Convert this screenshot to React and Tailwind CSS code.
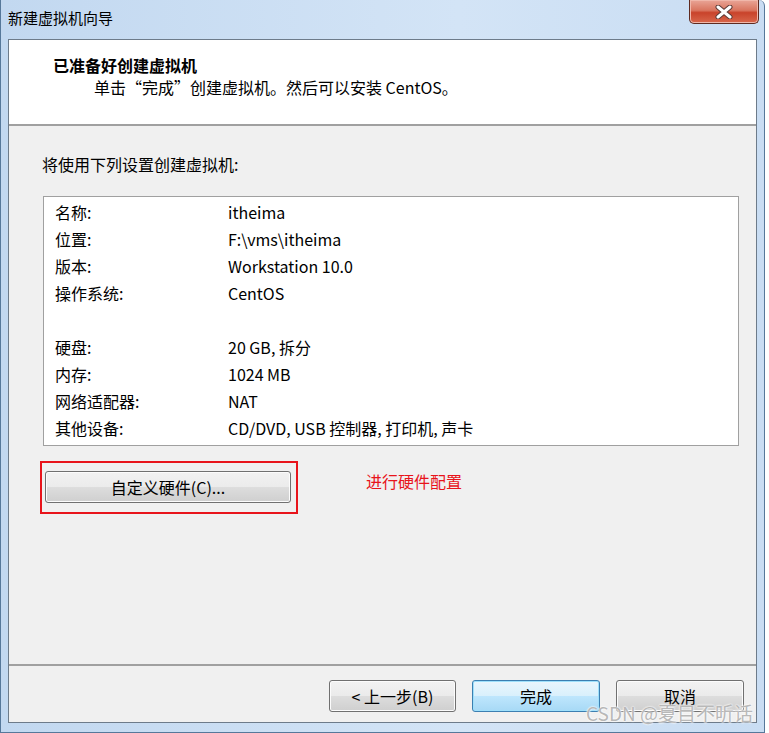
import React from "react";

const rows = [
  ["名称:", "itheima"],
  ["位置:", "F:\\vms\\itheima"],
  ["版本:", "Workstation 10.0"],
  ["操作系统:", "CentOS"],
  null,
  ["硬盘:", "20 GB, 拆分"],
  ["内存:", "1024 MB"],
  ["网络适配器:", "NAT"],
  ["其他设备:", "CD/DVD, USB 控制器, 打印机, 声卡"],
];

const font = { fontFamily: '"Noto Sans CJK SC", "Noto Sans", sans-serif' };

function WinButton({ children, focused, className = "" }) {
  return (
    <div
      className={`flex h-[32px] items-center justify-center rounded-[3px] border text-[16px] text-black ${
        focused
          ? "border-[#3c7fb1] bg-[linear-gradient(#eaf6fd_0%,#d9f0fc_50%,#bee6fd_51%,#a7d9f5_100%)] shadow-[inset_0_0_0_1px_#9fe0fb]"
          : "border-[#707070] bg-[linear-gradient(#f2f2f2_0%,#ebebeb_50%,#dddddd_51%,#cfcfcf_100%)] shadow-[inset_0_0_0_1px_#fcfcfc]"
      } ${className}`}
    >
      {children}
    </div>
  );
}

export default function App() {
  return (
    <div className="flex h-[733px] w-[769px] bg-white" style={font}>
      {/* Window frame */}
      <div className="flex h-full w-[765px] flex-col rounded-tr-[6px] border-r border-b border-l border-[#56789a] bg-[linear-gradient(90deg,#c2d8f0,#d3e4f6_60%,#c9ddf3)]">
        {/* Title bar */}
        <div className="flex h-[39px] items-start justify-between">
          <div className="pl-[7px] pt-[8px] text-[15px] leading-[20px] text-black">新建虚拟机向导</div>
          <div className="mr-[5px] flex h-[24px] w-[70px] items-center justify-center rounded-b-[5px] border border-t-0 border-[#5e2a20] bg-[linear-gradient(#e9a597_0%,#d9755f_45%,#c9432b_55%,#d8674c_100%)] shadow-[inset_0_0_0_1px_#f0b7aa]">
            <svg width="18" height="14" viewBox="0 0 18 14">
              <path d="M3 2 L15 12 M15 2 L3 12" stroke="#5a3a36" strokeWidth="5" strokeLinecap="round" />
              <path d="M3 2 L15 12 M15 2 L3 12" stroke="#ffffff" strokeWidth="3" strokeLinecap="round" />
            </svg>
          </div>
        </div>

        {/* Client area */}
        <div className="relative mx-[7px] mb-[9px] flex flex-1 flex-col border border-[#6d7b8a] bg-[#f0f0f0]">
          {/* Header */}
          <div className="h-[86px] border-b-2 border-[#a0a0a0] bg-white">
            <div className="pl-[44px] pt-[14px] text-[16px] font-bold leading-[22px] text-black">已准备好创建虚拟机</div>
            <div className="pl-[85px] pt-[0px] text-[16px] leading-[22px] text-black">单击“完成”创建虚拟机。然后可以安装 CentOS。</div>
          </div>

          {/* Body */}
          <div className="flex flex-1 flex-col pl-[33px] pr-[17px]">
            <div className="pt-[27px] text-[16px] leading-[22px] text-black">将使用下列设置创建虚拟机:</div>
            <div className="mt-[21px] ml-[1px] h-[250px] border border-[#a0a0a0] bg-white pl-[11px] pt-[1px]">
              {rows.map((r, i) =>
                r ? (
                  <div key={i} className="flex h-[27px] items-center text-[16px] text-black">
                    <div className="w-[173px]">{r[0]}</div>
                    <div>{r[1]}</div>
                  </div>
                ) : (
                  <div key={i} className="h-[27px]" />
                )
              )}
            </div>

            <div className="mt-[15px] flex items-center">
              <div className="-ml-[2px] h-[53px] w-[258px] border-2 border-[#e8141b] pl-[3px] pt-[8px]">
                <WinButton className="w-[246px]">自定义硬件(C)...</WinButton>
              </div>
              <div className="ml-[68px] -mt-[14px] text-[16px] text-[#e8141b]">进行硬件配置</div>
            </div>
          </div>

          {/* Footer */}
          <div className="h-[58px] border-t-2 border-[#a0a0a0] pt-[14px]">
            <div className="flex justify-end gap-[16px] pr-[12px]">
              <WinButton className="w-[127px]">&lt; 上一步(B)</WinButton>
              <WinButton focused className="w-[128px]">完成</WinButton>
              <WinButton className="w-[128px]">取消</WinButton>
            </div>
          </div>

          {/* Watermark */}
          <div className="absolute bottom-[-4px] right-[3px] text-[19px] leading-[26px] text-[#b8b8b8] [text-shadow:0_0_2px_#fff,0_0_2px_#fff]">
            CSDN @夏目不听话
          </div>
        </div>
      </div>
    </div>
  );
}
